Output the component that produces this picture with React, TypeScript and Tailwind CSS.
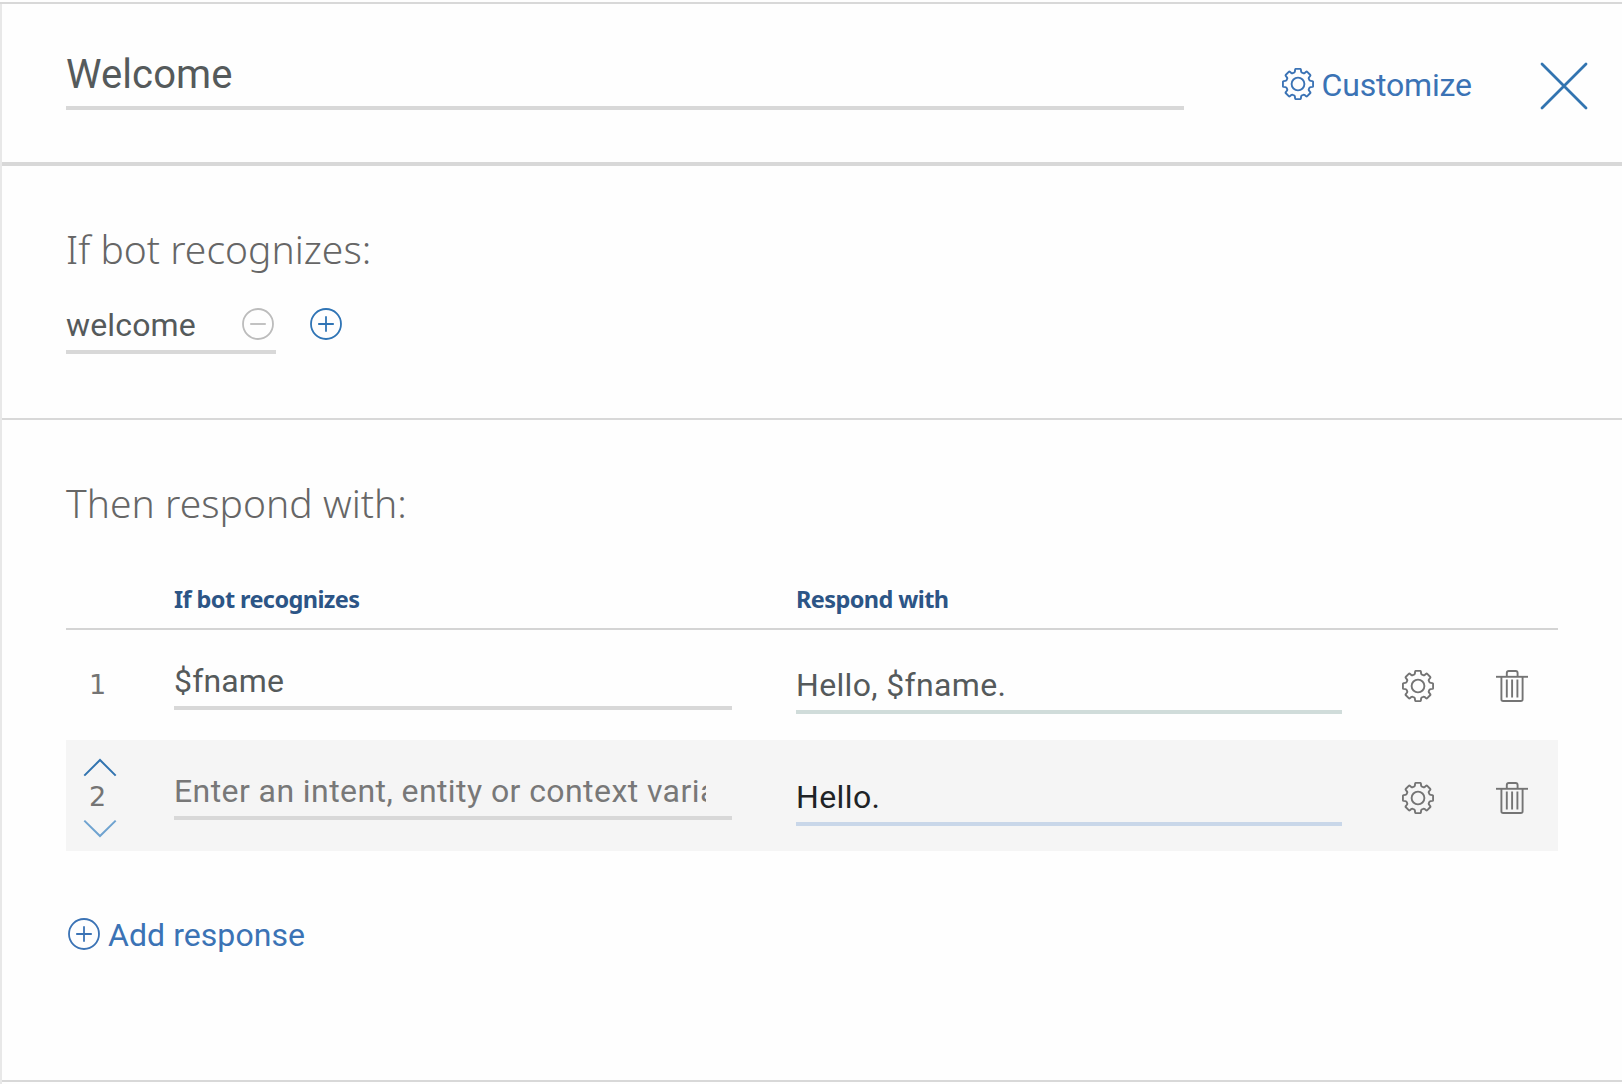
import type { ReactNode } from "react";

type IconProps = { className?: string };

// Outline of an eight-toothed cog on a 32px grid.
const COG_PATH = (() => {
  const point = (x: number, y: number, angle: number) => {
    const c = Math.cos(angle);
    const s = Math.sin(angle);
    return `${(16 + x * c - y * s).toFixed(2)} ${(16 + x * s + y * c).toFixed(2)}`;
  };
  let d = "";
  for (let i = 0; i < 8; i++) {
    const a = (i * Math.PI) / 4;
    d += `${i === 0 ? "M" : "L"}${point(-3.9, -11.4, a)}`;
    d += `Q${point(-3.2, -11.6, a)} ${point(-3.1, -12.6, a)}`;
    d += `L${point(-2.9, -14.4, a)}Q${point(-2.8, -15.1, a)} ${point(-2, -15.1, a)}`;
    d += `L${point(2, -15.1, a)}Q${point(2.8, -15.1, a)} ${point(2.9, -14.4, a)}`;
    d += `L${point(3.1, -12.6, a)}Q${point(3.2, -11.6, a)} ${point(3.9, -11.4, a)}`;
  }
  return d + "Z";
})();

function CogIcon({ className = "" }: IconProps) {
  return (
    <svg viewBox="0 0 32 32" className={`size-8 shrink-0 ${className}`} fill="none" stroke="currentColor" strokeWidth="1.9" strokeLinejoin="round">
      <path d={COG_PATH} />
      <circle cx="16" cy="16" r="6.4" />
    </svg>
  );
}

function TrashIcon({ className = "" }: IconProps) {
  return (
    <svg viewBox="0 0 32 32" className={`size-8 shrink-0 ${className}`} fill="none" stroke="currentColor" strokeWidth="1.9">
      <path d="M0 6.8H32" />
      <path d="M10.8 6.8V3Q10.8 1 12.8 1H19.6Q21.6 1 21.6 3V6.8" />
      <path d="M5.4 6.8V29.2Q5.4 31 7.2 31H24.8Q26.6 31 26.6 29.2V6.8" />
      <path d="M10.8 9.6V27.5M16.1 9.6V27.5M21.4 9.6V27.5" />
    </svg>
  );
}

function CircleIcon({ plus = false, className = "" }: IconProps & { plus?: boolean }) {
  return (
    <svg viewBox="0 0 32 32" className={`size-8 shrink-0 ${className}`} fill="none" stroke="currentColor" strokeWidth="1.8">
      <circle cx="16" cy="16" r="15" />
      <path d={plus ? "M8.2 16H23.8M16 8.2V23.8" : "M8.2 16H23.8"} />
    </svg>
  );
}

function Chevron({ down = false, className = "" }: IconProps & { down?: boolean }) {
  return (
    <svg viewBox="0 0 36 20" className={`h-5 w-9 ${className}`} fill="none" stroke="currentColor" strokeWidth="2">
      <path d={down ? "M2.3 2.6L18 18L33.7 2.6" : "M2.3 17.6L18 2L33.7 17.6"} />
    </svg>
  );
}

function Field({ className, children }: { className: string; children: ReactNode }) {
  return (
    <div className={`h-[49px] shrink-0 border-b-4 text-[32px] leading-10 whitespace-nowrap ${className}`}>
      {children}
    </div>
  );
}

export default function App() {
  return (
    <div className="flex h-[1084px] w-full flex-col overflow-hidden bg-[#fefefe] pt-[2px] font-[Roboto,sans-serif] text-[#555a5b]">
      <div className="h-[2px] shrink-0 bg-[#d8d8d8]" />
      <div className="flex-1 border-l-2 border-[#e8e8e8]">
        <header className="flex h-[162px] items-start border-b-4 border-[#d8d8d8] pl-16">
          <h1 className="mt-[46px] h-[60px] w-[1118px] border-b-4 border-[#d8d8d8] text-[40px] leading-[50px] tracking-[0.1px]">
            Welcome
          </h1>
          <button className="mt-[60px] ml-[98px] flex h-10 items-center text-[#3b73b5]">
            <CogIcon />
            <span className="ml-[7.5px] pt-[2px] text-[32px] leading-10 tracking-[-0.17px]">Customize</span>
          </button>
          <button className="mt-[58px] mr-[34px] ml-auto text-[#3274b0]">
            <svg viewBox="0 0 48 48" className="size-12" stroke="currentColor" strokeWidth="2.8" strokeLinecap="round">
              <path d="M2 2L46 46M46 2L2 46" />
            </svg>
          </button>
        </header>

        <section className="h-[254px] border-b-2 border-[#d8d8d8] pt-[59px] pl-16">
          <h2 className="font-['Noto_Sans',sans-serif] text-[39px] leading-[48px] font-light tracking-[0.02px] text-[#666]">
            If bot recognizes:
          </h2>
          <div className="mt-8 flex items-start">
            <Field className="flex w-[210px] justify-between border-[#d8d8d8] pr-[2px] tracking-[0.15px]">
              <span>welcome</span>
              <CircleIcon className="mt-[3px] text-[#bcbcbc]" />
            </Field>
            <CircleIcon plus className="mt-[3px] ml-[34px] text-[#2f74b5]" />
          </div>
        </section>

        <section className="h-[660px] pt-[59px] pr-16 pl-16">
          <h2 className="font-['Noto_Sans',sans-serif] text-[39px] leading-[48px] font-light tracking-[0.04px] text-[#666]">
            Then respond with:
          </h2>

          <div className="mt-14 flex h-[47px] border-b-2 border-[#d4d4d4] pl-[108px] font-['Noto_Sans',sans-serif] text-[23.5px] leading-8 font-bold text-[#2c5586]">
            <span className="w-[622px] tracking-[-0.6px]">If bot recognizes</span>
            <span className="tracking-[-0.6px]">Respond with</span>
          </div>

          <div className="flex h-[110px] items-start">
            <div className="mt-[39px] w-[108px] pl-[23px] font-['DejaVu_Sans',sans-serif] text-[27px] leading-8 text-[#747474]">1</div>
            <Field className="mt-[31px] w-[558px] border-[#d8d8d8] tracking-[0.15px]">$fname</Field>
            <Field className="mt-[35px] ml-16 w-[546px] border-[#d0dcda] tracking-[0.34px]">Hello, $fname.</Field>
            <CogIcon className="mt-10 ml-[60px] text-[#747474]" />
            <TrashIcon className="mt-10 ml-[62px] text-[#747474]" />
          </div>

          <div className="flex h-[111px] items-start bg-[#f5f5f5]">
            <div className="flex w-[108px] flex-col pt-[18px] pl-4 text-[#3274b0]">
              <Chevron />
              <span className="mt-[3px] pl-[7px] font-['DejaVu_Sans',sans-serif] text-[27px] leading-8 text-[#747474]">2</span>
              <Chevron down className="mt-[5px] text-[#6fa3d0]" />
            </div>
            <Field className="mt-[31px] w-[558px] border-[#d8d8d8] tracking-[0.42px] text-[#787878]">
              <div className="w-[532px] overflow-hidden">Enter an intent, entity or context variable</div>
            </Field>
            <Field className="mt-[37px] ml-16 w-[546px] border-[#c9d7e9] tracking-[0.4px] text-[#202326]">Hello.</Field>
            <CogIcon className="mt-[42px] ml-[60px] text-[#747474]" />
            <TrashIcon className="mt-[42px] ml-[62px] text-[#747474]" />
          </div>

          <button className="mt-[63px] ml-[2px] flex h-10 items-center text-[#3b73b5]">
            <CircleIcon plus />
            <span className="ml-2 pt-[2px] text-[32px] leading-10 tracking-[0.06px]">Add response</span>
          </button>
        </section>
        <div className="h-[2px] bg-[#d8d8d8]" />
      </div>
    </div>
  );
}
